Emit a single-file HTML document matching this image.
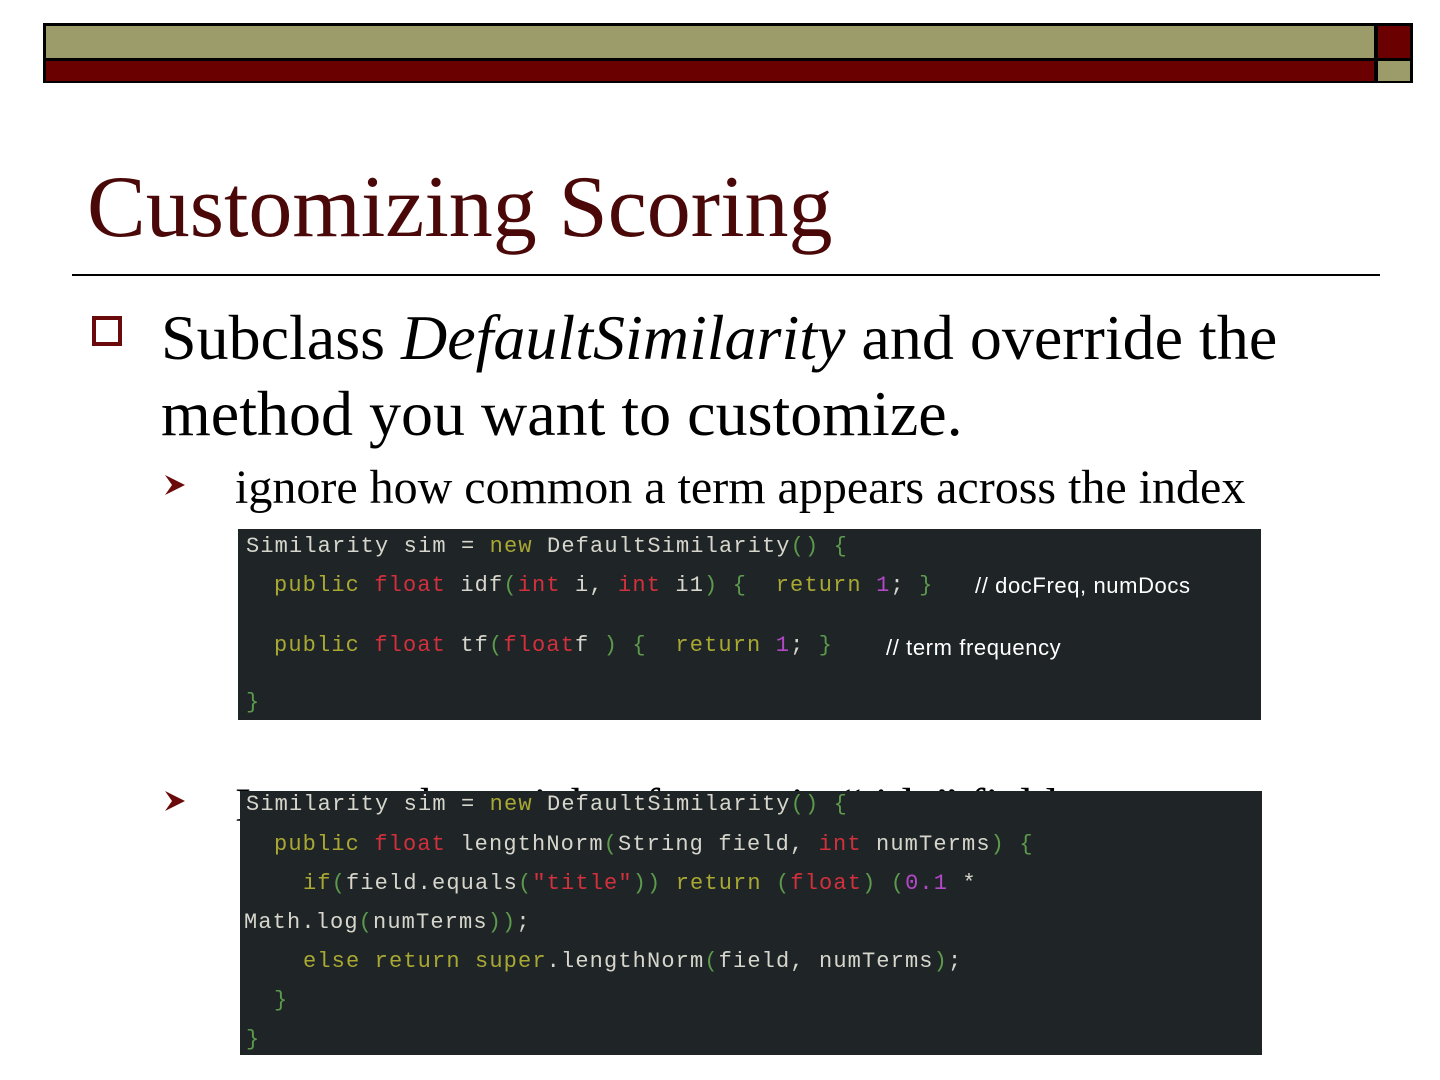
<!DOCTYPE html>
<html><head><meta charset="utf-8"><style>
body{margin:0;width:1440px;height:1080px;background:#fff;position:relative;overflow:hidden;font-family:"Liberation Serif",serif}
.a{position:absolute}
.code{position:absolute;background:#1f2427}
.ln{position:absolute;font-family:"Liberation Mono",monospace;font-size:22px;letter-spacing:1.13px;line-height:26px;white-space:pre;color:#d6d6cc}
.k{color:#a8a832}.r{color:#d2303c}.g{color:#5c9a4c}.p{color:#b448c8}
.cm{position:absolute;font-family:"Liberation Sans",sans-serif;font-size:22px;letter-spacing:0.6px;color:#fff;line-height:26px;white-space:pre}
</style></head><body>
<div class="a" style="left:43px;top:23px;width:1370px;height:60px;background:#000"></div>
<div class="a" style="left:46px;top:26px;width:1328px;height:32px;background:#9c9b6a"></div>
<div class="a" style="left:46px;top:61px;width:1328px;height:20px;background:#6b0000"></div>
<div class="a" style="left:1378px;top:26px;width:32px;height:32px;background:#6b0000"></div>
<div class="a" style="left:1378px;top:61px;width:32px;height:20px;background:#9c9b6a"></div>

<div class="a" style="left:87px;top:164px;font-size:88px;line-height:88px;color:#4a0808;white-space:nowrap">Customizing Scoring</div>
<div class="a" style="left:72px;top:274px;width:1308px;height:2px;background:#000"></div>

<div class="a" style="left:92px;top:316px;width:22px;height:22px;border:4px solid #6b0a0a"></div>
<div class="a" style="left:161px;top:300px;font-size:64px;line-height:76px;color:#000;white-space:nowrap">Subclass <i>DefaultSimilarity</i> and override the<br>method you want to customize.</div>

<svg class="a" style="left:164px;top:474px" width="22" height="22" viewBox="0 0 22 22"><path d="M1 1 L21 11 L1 21 L8 11 Z" fill="#6b0a0a"/></svg>
<div class="a" style="left:235px;top:464px;font-size:48px;line-height:48px;color:#000;white-space:nowrap">ignore how common a term appears across the index</div>

<svg class="a" style="left:164px;top:790px" width="22" height="22" viewBox="0 0 22 22"><path d="M1 1 L21 11 L1 21 L8 11 Z" fill="#6b0a0a"/></svg>
<div class="a" style="left:235px;top:782px;font-size:48px;line-height:48px;color:#000;white-space:nowrap">Increase the weight of terms in “title” field</div>

<div class="code" style="left:238px;top:529px;width:1023px;height:191px"></div>
<div class="ln" style="left:246px;top:534px">Similarity sim = <span class="k">new</span> DefaultSimilarity<span class="g">() {</span></div>
<div class="ln" style="left:274px;top:573px"><span class="k">public</span> <span class="r">float</span> idf<span class="g">(</span><span class="r">int</span> i, <span class="r">int</span> i1<span class="g">) {</span>  <span class="k">return</span> <span class="p">1</span>; <span class="g">}</span></div>
<div class="cm" style="left:975px;top:573px">// docFreq, numDocs</div>
<div class="ln" style="left:274px;top:633px"><span class="k">public</span> <span class="r">float</span> tf<span class="g">(</span><span class="r">float</span>f <span class="g">) {</span>  <span class="k">return</span> <span class="p">1</span>; <span class="g">}</span></div>
<div class="cm" style="left:886px;top:635px">// term frequency</div>
<div class="ln" style="left:246px;top:690px"><span class="g">}</span></div>

<div class="code" style="left:240px;top:791px;width:1022px;height:264px"></div>
<div class="ln" style="left:246px;top:792px">Similarity sim = <span class="k">new</span> DefaultSimilarity<span class="g">() {</span></div>
<div class="ln" style="left:274px;top:832px"><span class="k">public</span> <span class="r">float</span> lengthNorm<span class="g">(</span>String field, <span class="r">int</span> numTerms<span class="g">) {</span></div>
<div class="ln" style="left:303px;top:871px"><span class="k">if</span><span class="g">(</span>field.equals<span class="g">(</span><span class="r">"title"</span><span class="g">))</span> <span class="k">return</span> <span class="g">(</span><span class="r">float</span><span class="g">)</span> <span class="g">(</span><span class="p">0.1</span> *</div>
<div class="ln" style="left:244px;top:910px">Math.log<span class="g">(</span>numTerms<span class="g">))</span>;</div>
<div class="ln" style="left:303px;top:949px"><span class="k">else return super</span>.lengthNorm<span class="g">(</span>field, numTerms<span class="g">)</span>;</div>
<div class="ln" style="left:274px;top:988px"><span class="g">}</span></div>
<div class="ln" style="left:246px;top:1027px"><span class="g">}</span></div>
</body></html>
